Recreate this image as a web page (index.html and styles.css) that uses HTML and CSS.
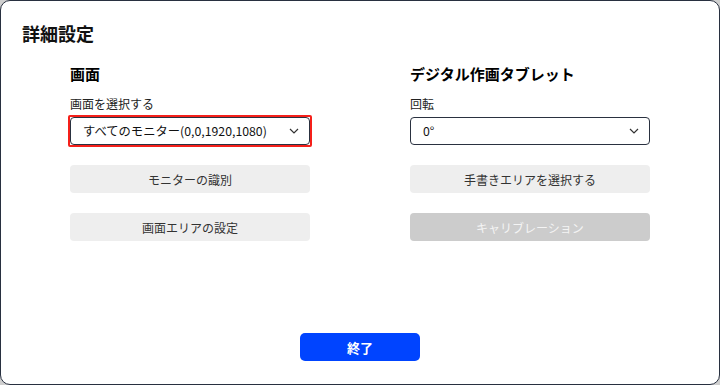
FILE: index.html
```html
<!DOCTYPE html>
<html lang="ja">
<head>
    <meta charset="UTF-8">
    <meta name="viewport" content="width=device-width, initial-scale=1.0">
    <title>詳細設定</title>
    <link rel="stylesheet" href="styles.css">
</head>
<body>
    <div class="window">
        <h1 class="title">詳細設定</h1>

        <div class="columns">
            <!-- 画面 -->
            <div class="column">
                <h2>画面</h2>
                <label class="field-label">画面を選択する</label>
                <div class="select-frame">
                    <div class="select">
                        <span>すべてのモニター(0,0,1920,1080)</span>
                        <svg class="chevron" width="10" height="6" viewBox="0 0 10 6"><path d="M1 1l4 4 4-4" fill="none" stroke="#333" stroke-width="1.2"/></svg>
                    </div>
                </div>
                <button class="btn">モニターの識別</button>
                <button class="btn">画面エリアの設定</button>
            </div>

            <!-- デジタル作画タブレット -->
            <div class="column">
                <h2>デジタル作画タブレット</h2>
                <label class="field-label">回転</label>
                <div class="select-frame plain">
                    <div class="select">
                        <span>0°</span>
                        <svg class="chevron" width="10" height="6" viewBox="0 0 10 6"><path d="M1 1l4 4 4-4" fill="none" stroke="#333" stroke-width="1.2"/></svg>
                    </div>
                </div>
                <button class="btn">手書きエリアを選択する</button>
                <button class="btn btn-disabled" disabled>キャリブレーション</button>
            </div>
        </div>

        <div class="footer">
            <button class="btn-primary">終了</button>
        </div>
    </div>
</body>
</html>
```

FILE: styles.css
```css
/* 全体 */
body {
    margin: 0;
    background-color: #cfcfcf;
    font-family: "Noto Sans CJK JP", "Noto Sans", sans-serif;
    color: #222;
}

.window {
    box-sizing: border-box;
    width: 720px;
    height: 385px;
    background: #ffffff;
    border: 1px solid #283040;
    border-radius: 10px;
    display: flex;
    flex-direction: column;
}

.title {
    margin: 19px 0 0 21px;
    font-size: 18px;
    line-height: 26px;
    font-weight: bold;
    color: #111;
}

/* カラム */
.columns {
    display: grid;
    grid-template-columns: 240px 240px;
    column-gap: 100px;
    margin: 17px 0 0 69px;
}

.column {
    display: flex;
    flex-direction: column;
}

.column h2 {
    margin: 0;
    font-size: 15px;
    line-height: 22px;
    font-weight: bold;
    color: #000;
}

.field-label {
    margin-top: 11px;
    font-size: 12px;
    line-height: 16px;
    color: #222;
}

.select-frame {
    margin: 3px -2px 0;
    border: 2px solid #f5201a;
    border-radius: 2px;
}

.select-frame.plain {
    border-color: transparent;
}

.select {
    box-sizing: border-box;
    height: 28px;
    padding: 0 12px;
    border: 1px solid #2a3140;
    border-radius: 4px;
    display: flex;
    align-items: center;
    justify-content: space-between;
    font-size: 12.3px;
    color: #111;
}

.chevron {
    margin-right: -2px;
}

/* ボタン */
.btn {
    height: 28px;
    margin-top: 18px;
    border: none;
    border-radius: 4px;
    background-color: #eeeeee;
    font-family: inherit;
    font-size: 12px;
    color: #333;
    padding: 0;
}

.btn + .btn {
    margin-top: 20px;
}

.btn-disabled {
    background-color: #cccccc;
    color: #f4f4f4;
}

.footer {
    margin-top: auto;
    padding-bottom: 23px;
    display: flex;
    justify-content: center;
}

.btn-primary {
    width: 120px;
    height: 28px;
    border: none;
    border-radius: 5px;
    background-color: #0044ff;
    color: #ffffff;
    font-family: inherit;
    font-size: 13px;
    font-weight: bold;
    padding: 0;
}
```
